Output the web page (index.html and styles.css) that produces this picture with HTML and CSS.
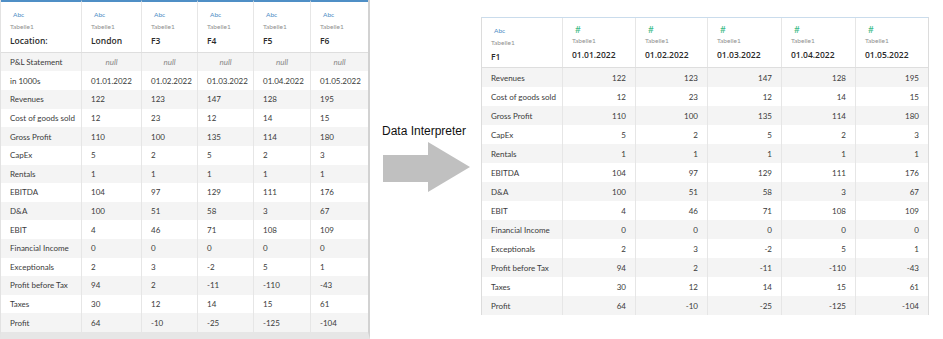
FILE: index.html
```html
<!DOCTYPE html>
<html lang="en">
<head>
    <meta charset="UTF-8">
    <title>Data Interpreter</title>
    <link rel="stylesheet" href="styles.css">
</head>
<body>
    <div class="page">
        <!-- Raw sheet -->
        <div class="sheet sheet-left" id="sheet-left">
            <div class="row head"></div>
        </div>

        <!-- Arrow -->
        <div class="step">
            <div class="step-label">Data Interpreter</div>
            <svg class="step-arrow" width="90" height="51" viewBox="0 0 90 51">
                <polygon points="1,13 46,13 46,0 88,25 46,50 46,40 1,40" fill="#c0c0c0"/>
            </svg>
        </div>

        <!-- Cleaned sheet -->
        <div class="right-wrap">
            <div class="sheet sheet-right" id="sheet-right">
                <div class="row head"></div>
            </div>
        </div>
    </div>

    <script>
        const dates = ["01.01.2022", "01.02.2022", "01.03.2022", "01.04.2022", "01.05.2022"];
        const rows = [
            ["Revenues", 122, 123, 147, 128, 195],
            ["Cost of goods sold", 12, 23, 12, 14, 15],
            ["Gross Profit", 110, 100, 135, 114, 180],
            ["CapEx", 5, 2, 5, 2, 3],
            ["Rentals", 1, 1, 1, 1, 1],
            ["EBITDA", 104, 97, 129, 111, 176],
            ["D&A", 100, 51, 58, 3, 67],
            ["EBIT", 4, 46, 71, 108, 109],
            ["Financial Income", 0, 0, 0, 0, 0],
            ["Exceptionals", 2, 3, -2, 5, 1],
            ["Profit before Tax", 94, 2, -11, -110, -43],
            ["Taxes", 30, 12, 14, 15, 61],
            ["Profit", 64, -10, -25, -125, -104]
        ];

        function headCell(icon, name) {
            const cell = document.createElement("div");
            cell.className = "cell";
            cell.innerHTML =
                '<span class="type ' + (icon === "#" ? "num" : "abc") + '">' + icon + '</span>' +
                '<span class="src">Tabelle1</span>' +
                '<span class="name"></span>';
            cell.querySelector(".name").textContent = name;
            return cell;
        }

        function addRow(sheet, values, extra) {
            const row = document.createElement("div");
            row.className = "row" + (sheet.children.length % 2 ? " alt" : "");
            values.forEach((v, i) => {
                const cell = document.createElement("div");
                cell.className = "cell";
                if (i === 0) cell.classList.add("label");
                else if (extra) cell.classList.add(extra);
                cell.textContent = v;
                row.appendChild(cell);
            });
            sheet.appendChild(row);
        }

        // left: raw excel sheet
        const left = document.getElementById("sheet-left");
        ["Location:", "London", "F3", "F4", "F5", "F6"].forEach(n => {
            left.querySelector(".head").appendChild(headCell("Abc", n));
        });
        addRow(left, ["P&L Statement", "null", "null", "null", "null", "null"], "null");
        addRow(left, ["in 1000s"].concat(dates));
        rows.forEach(r => addRow(left, r));

        // right: interpreted sheet
        const right = document.getElementById("sheet-right");
        right.querySelector(".head").appendChild(headCell("Abc", "F1"));
        dates.forEach(d => right.querySelector(".head").appendChild(headCell("#", d)));
        rows.forEach(r => addRow(right, r, "num"));
    </script>
</body>
</html>
```

FILE: styles.css
```css
body {
    margin: 0;
    background: #fff;
    font-family: Lato, "Open Sans", sans-serif;
    color: #3a3a3a;
}
.page {
    display: flex;
    height: 339px;
    overflow: hidden;
}
.sheet {
    display: flex;
    flex-direction: column;
    box-sizing: border-box;
    flex: none;
}
.row {
    display: grid;
    align-items: stretch;
}
.row.alt {
    background-color: #f4f4f4;
}
.cell {
    display: flex;
    align-items: center;
    padding: 0 9px;
    border-right: 1px solid #e6e6e6;
    font-size: 8px;
    white-space: nowrap;
    overflow: hidden;
}
.cell:last-child {
    border-right: none;
}
.cell.null {
    justify-content: center;
    font-style: italic;
    color: #888;
}
.row.head {
    border-bottom: 1px solid #dedede;
}
.row.head .cell {
    flex-direction: column;
    align-items: flex-start;
    justify-content: flex-start;
}
.type {
    margin-left: 3px;
    font-size: 6.5px;
    line-height: 10px;
}
.type.abc {
    color: #4a8cc4;
}
.type.num {
    color: #3dbb86;
    font-size: 10px;
}
.src {
    margin-top: 2px;
    font-size: 6.5px;
    line-height: 10px;
    color: #909090;
}
.name {
    margin-top: 3px;
    font-family: "Open Sans", Lato, sans-serif;
    font-size: 8.5px;
    font-weight: 600;
    line-height: 12px;
    color: #2a2a2a;
}

/* raw sheet */
.sheet-left {
    width: 370px;
    border-left: 1px solid #e2e2e2;
    border-right: 2px solid #d2d2d2;
    border-bottom: 7px solid #e6e6e6;
}
.sheet-left .row {
    grid-template-columns: 81px 60px 56px 56px 57px 57px;
    height: 18.67px;
}
.sheet-left .row.head {
    height: 52px;
}
.sheet-left .row.head .cell {
    padding-top: 8px;
    border-top: 2px solid #4f8fc6;
}

/* arrow */
.step {
    width: 111px;
    flex: none;
    display: flex;
    flex-direction: column;
    align-items: flex-start;
    padding: 124px 0 0 12px;
    box-sizing: border-box;
}
.step-label {
    font-family: "Liberation Sans", Arial, sans-serif;
    font-size: 12px;
    line-height: 14px;
    color: #111;
}
.step-arrow {
    display: block;
    margin-top: 4px;
}

/* interpreted sheet */
.right-wrap {
    padding-top: 17px;
}
.sheet-right {
    width: 448px;
    border-top: 1px solid #cadcec;
    border-left: 1px solid #dcdcdc;
    border-right: 1px solid #dcdcdc;
}
.sheet-right .row {
    grid-template-columns: 81px 73px 72px 74px 74px 72px;
    height: 19px;
}
.sheet-right .row.head {
    height: 49px;
}
.sheet-right .row.head .cell {
    padding-top: 6px;
}
.sheet-right .row.head .type.abc {
    margin-top: 2px;
}
.sheet-right .cell.num {
    justify-content: flex-end;
}
```
